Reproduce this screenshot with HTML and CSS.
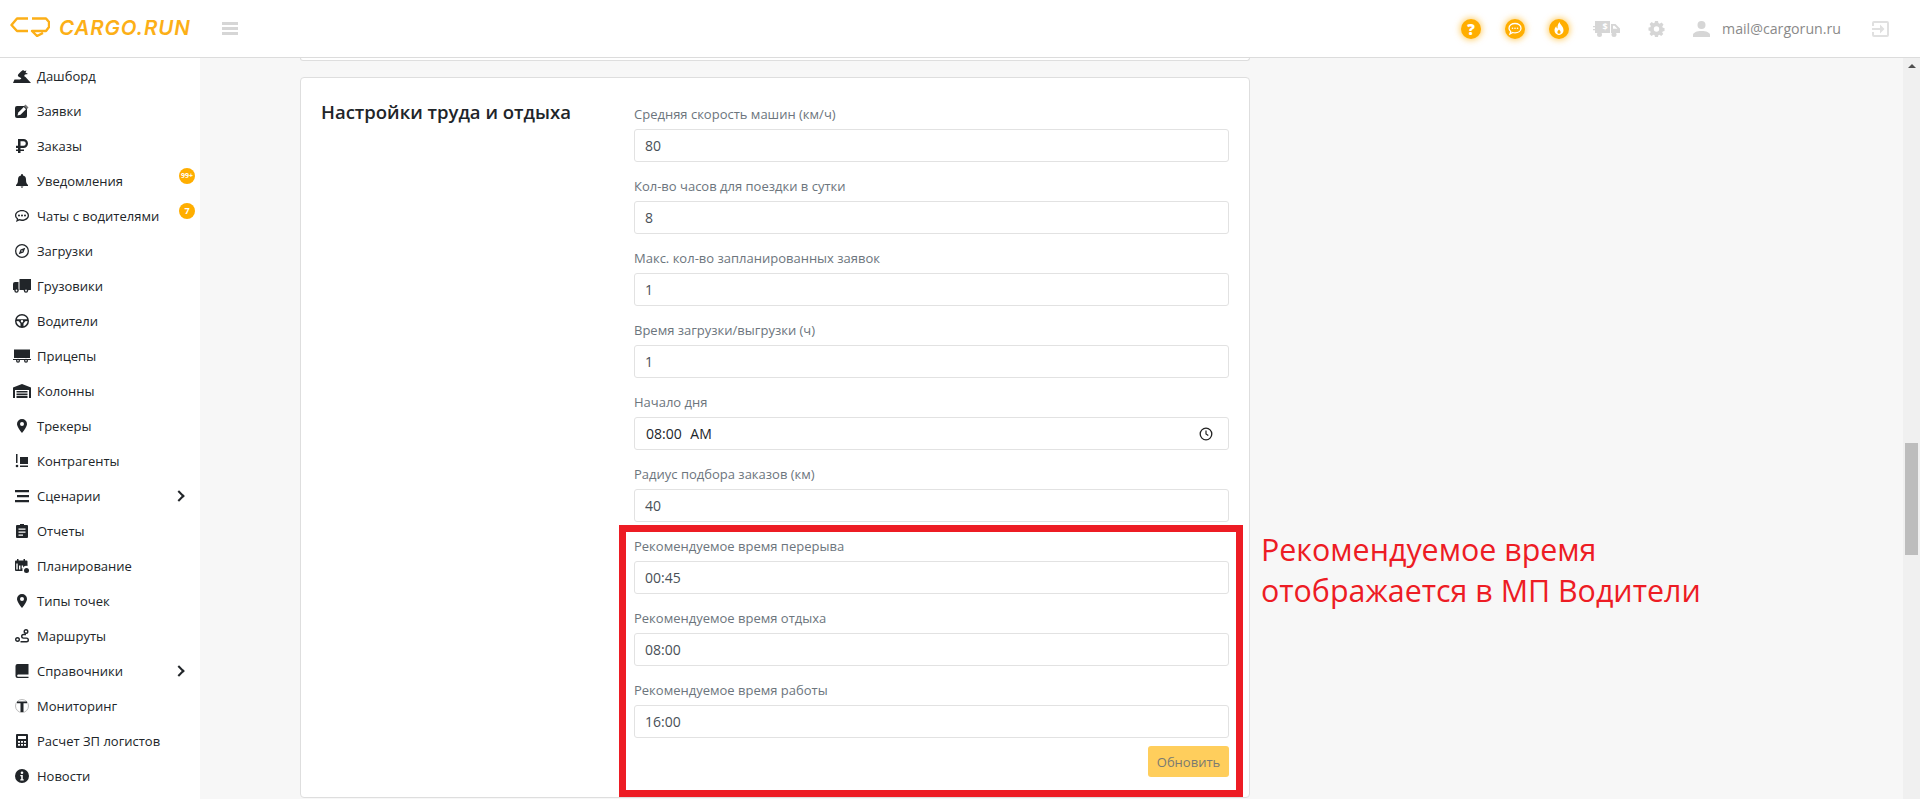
FILE: index.html
```html
<!DOCTYPE html>
<html lang="ru">
<head>
    <meta charset="UTF-8">
    <title>Cargo.Run</title>
    <link rel="stylesheet" href="styles.css">
</head>
<body>
    <svg class="sprite" width="0" height="0" aria-hidden="true">
        <symbol id="i-dash" viewBox="0 0 18 14"><path d="M0 14l1.500-3.500H6c2.500 0 3-1 1-2-2-1-3-2-1-4l2-2L10 1l1.500 1 2-.5-1 2 2.500 1.500-3 .5c-1 1-1 2 .5 2.500L18 14z"/></symbol>
        <symbol id="i-edit" viewBox="0 0 14 14"><rect x="0" y="2" width="12" height="12" rx="2"/><path fill="#fff" d="M2.500 11.500l.8-3L8.800 3l2.200 2.200-5.500 5.500z"/><path fill="#777" d="M10.500 .5L13.500 3.500 12 5 9 2z"/></symbol>
        <symbol id="i-rub" viewBox="0 0 12 14"><path fill-rule="evenodd" d="M2 0h5.500a4.500 4.500 0 0 1 0 9H4.500v1.500H8v1.500H4.500v2H2v-2H0v-1.500h2V9H0V6.800h2zM4.500 2.200v4.600h3a2.300 2.300 0 0 0 0-4.600z"/></symbol>
        <symbol id="i-bell" viewBox="0 0 12 14"><path d="M6 0a1 1 0 0 1 1 1v.6A4 4 0 0 1 10 5.500c0 3 .6 4.200 2 5.500v1H0v-1c1.400-1.300 2-2.500 2-5.500A4 4 0 0 1 5 1.600V1a1 1 0 0 1 1-1zM4.500 12.600h3L6 14z"/></symbol>
        <symbol id="i-chat" viewBox="0 0 14 14"><path fill-rule="evenodd" d="M7 1c3.900 0 7 2.400 7 5.500S10.900 12 7 12c-1 0-1.900-.1-2.700-.4L1 13l.9-2.900C.7 9.200 0 7.900 0 6.500 0 3.400 3.100 1 7 1zm0 1.300c-3.200 0-5.700 1.900-5.700 4.200 0 1.200.7 2.200 1.900 3l-.4 1.100 1.400-.6c.8.300 1.800.5 2.800.5 3.200 0 5.700-1.900 5.700-4s-2.500-4.200-5.700-4.200zM4 5.600a1 1 0 1 1 0 2 1 1 0 0 1 0-2zm3 0a1 1 0 1 1 0 2 1 1 0 0 1 0-2zm3 0a1 1 0 1 1 0 2 1 1 0 0 1 0-2z"/></symbol>
        <symbol id="i-compass" viewBox="0 0 14 14"><path fill-rule="evenodd" d="M7 0a7 7 0 1 1 0 14A7 7 0 0 1 7 0zm0 1.300a5.700 5.700 0 1 0 0 11.400A5.700 5.700 0 0 0 7 1.300zM10.300 3.700L8.500 8.500 3.700 10.300 5.500 5.500zM7 6.200a.8.8 0 1 0 0 1.600.8.8 0 0 0 0-1.600z"/></symbol>
        <symbol id="i-truck" viewBox="0 0 18 14"><path d="M6.500 0H18v11H6.500z"/><path d="M0 5a2 2 0 0 1 2-2h3.500v8H0z"/><circle cx="3.500" cy="11.500" r="2.200"/><circle cx="13" cy="11.500" r="2.200"/><circle cx="3.500" cy="11.500" r=".9" fill="#fff"/><circle cx="13" cy="11.500" r=".9" fill="#fff"/></symbol>
        <symbol id="i-wheel" viewBox="0 0 14 14"><path fill-rule="evenodd" d="M7 0a7 7 0 1 1 0 14A7 7 0 0 1 7 0zm0 1.500A5.500 5.500 0 0 0 1.800 5.200h10.400A5.500 5.500 0 0 0 7 1.500zM1.500 7c0 2.500 1.700 4.700 4 5.300V9.500L3.800 7.200zm11 0l-2.300.2-1.700 2.300v2.800c2.300-.6 4-2.800 4-5.300zM7 6a1.200 1.200 0 1 0 0 2.400A1.200 1.200 0 0 0 7 6z"/></symbol>
        <symbol id="i-trailer" viewBox="0 0 18 14"><path d="M1 .5h16V9H1z"/><path d="M0 10h18v1H0z"/><circle cx="5" cy="11.800" r="2"/><circle cx="13" cy="11.800" r="2"/><circle cx="5" cy="11.800" r=".8" fill="#fff"/><circle cx="13" cy="11.800" r=".8" fill="#fff"/></symbol>
        <symbol id="i-garage" viewBox="0 0 18 14"><path fill-rule="evenodd" d="M9 0l9 3.500V14h-2V6H2v8H0V3.500zM3.500 7h11v1.500h-11zm0 2.400h11v1.500h-11zm0 2.400h11V14h-11z"/></symbol>
        <symbol id="i-pin" viewBox="0 0 10 14"><path fill-rule="evenodd" d="M5 0a5 5 0 0 1 5 5c0 2.500-3 6.500-5 9-2-2.500-5-6.500-5-9a5 5 0 0 1 5-5zm0 3a2 2 0 1 0 0 4 2 2 0 0 0 0-4z"/></symbol>
        <symbol id="i-partner" viewBox="0 0 12 14"><path d="M0 0h1.500v9H0z"/><circle cx="1" cy="12" r="1.300"/><path d="M4 3h8v7H4z"/><path d="M4 11.500h8V13H4z"/></symbol>
        <symbol id="i-lines" viewBox="0 0 14 14"><path d="M0 1h14v2.200H0zM2 6h12v2.200H2zM0 11h14v2.200H0z"/></symbol>
        <symbol id="i-report" viewBox="0 0 12 14"><path fill-rule="evenodd" d="M1 1h3V0h4v1h3a1 1 0 0 1 1 1v11a1 1 0 0 1-1 1H1a1 1 0 0 1-1-1V2a1 1 0 0 1 1-1zm1.500 3.500v1.200h7V4.500zm0 3v1.200h7V7.500zm0 3v1.200h4.500v-1.200z"/></symbol>
        <symbol id="i-plan" viewBox="0 0 14 14"><path fill-rule="evenodd" d="M2 0h1.500v1.500h5V0H10v1.500h1.500a1 1 0 0 1 1 1V7a4 4 0 0 0-5 5H1a1 1 0 0 1-1-1V2.500a1 1 0 0 1 1-1h1zM1.300 4.500v6h1.400v-6zm2.700 2v4h1.400v-4zm2.700 0v3h1.400v-3z"/><circle cx="11.500" cy="11.500" r="2.500"/></symbol>
        <symbol id="i-route" viewBox="0 0 14 14"><circle cx="2.500" cy="10.500" r="1.800" fill="none" stroke="#212529" stroke-width="1.400"/><circle cx="11" cy="2.500" r="1.800" fill="none" stroke="#212529" stroke-width="1.400"/><path fill="none" stroke="#212529" stroke-width="1.400" d="M11 5.500H8.500a1.800 1.800 0 0 0 0 3.600h3a1.800 1.800 0 0 1 0 3.600H5.500"/></symbol>
        <symbol id="i-book" viewBox="0 0 13 14"><path d="M2 0h11v10.500H2.500a1.200 1.200 0 0 0 0 2.300H13V14H2a2 2 0 0 1-2-2V2a2 2 0 0 1 2-2z"/></symbol>
        <symbol id="i-monitor" viewBox="0 0 14 14"><circle cx="7" cy="7" r="6.500" fill="none" stroke="#bbb"/><path d="M2 2.500h10v1.800H8.500V13h-3V4.300H2z"/></symbol>
        <symbol id="i-calc" viewBox="0 0 12 14"><path fill-rule="evenodd" d="M1 0h10a1 1 0 0 1 1 1v12a1 1 0 0 1-1 1H1a1 1 0 0 1-1-1V1a1 1 0 0 1 1-1zm1 2v3h8V2zm0 5v1.800h2V7zm3 0v1.800h2V7zm3 0v1.800h2V7zm-6 3v1.800h2V10zm3 0v1.800h2V10zm3 0v1.800h2V10z"/></symbol>
        <symbol id="i-info" viewBox="0 0 14 14"><path fill-rule="evenodd" d="M7 0a7 7 0 1 1 0 14A7 7 0 0 1 7 0zm0 2.500a1.300 1.300 0 1 0 0 2.600 1.300 1.300 0 0 0 0-2.600zM5.300 6v1.300h.9v3h-.9v1.200h3.400v-1.200h-.9V6z"/></symbol>
    </svg>

    <header class="topbar">
        <div class="brand">
            <svg class="brand-mark" viewBox="0 0 40 20" width="40" height="20">
                <path d="M18 1.500H7L1.500 8 7 14H18M22 1.500H36L39 5V10L36 14H22L27 19 33 16" fill="none" stroke="#fcaf17" stroke-width="2.400" stroke-linejoin="round"/>
            </svg>
            <span class="brand-name">CARGO.RUN</span>
        </div>
        <button class="burger"><span></span><span></span><span></span></button>
        <div class="topbar-right">
            <span class="glow-icon">?</span>
            <span class="glow-icon">
                <svg viewBox="0 0 14 14" width="14" height="14"><path d="M7 1.500c3.300 0 6 2 6 4.700s-2.700 4.600-6 4.600c-.8 0-1.600-.1-2.300-.3L2 12l.7-2.400C1.600 8.700 1 7.500 1 6.200 1 3.500 3.700 1.500 7 1.500z" fill="none" stroke="#fff" stroke-width="1.300"/><circle cx="4.500" cy="6.200" r=".8" fill="#fff"/><circle cx="7" cy="6.200" r=".8" fill="#fff"/><circle cx="9.500" cy="6.200" r=".8" fill="#fff"/></svg>
            </span>
            <span class="glow-icon">
                <svg viewBox="0 0 14 14" width="14" height="14"><path fill-rule="evenodd" d="M7.500 0c.3 2.200 4 4.200 4 8.200A4.600 4.600 0 0 1 7 13a4.600 4.600 0 0 1-4.500-4.800c0-1.800.9-3.200 1.800-4 .1 1.200.6 1.900 1.300 2.200C5.300 4 6 1.800 7.500 0zM7 7.500c-.9 1-1.600 1.700-1.600 2.700a1.600 1.600 0 0 0 3.200 0c0-1-.7-1.700-1.600-2.700z" fill="#fff"/></svg>
            </span>
            <svg class="tool-truck" viewBox="0 0 27 16" width="27" height="16">
                <path d="M2 0h15v12H2z"/>
                <path fill-rule="evenodd" d="M18 3h4.500l4.500 4.500V12h-9zM20 4.800v3h4.500l-3-3z"/>
                <path d="M0 5h6v1.200H0zM0 8h6v1.200H0z"/>
                <circle cx="6.500" cy="13.500" r="2.500"/><circle cx="21" cy="13.500" r="2.500"/>
                <text x="9.500" y="9" class="truck-sign">$</text>
            </svg>
            <svg class="tool-gear" viewBox="0 0 16 16" width="17" height="16"><path fill-rule="evenodd" d="M6.500 0h3l.4 2.100 1.300.6L13 1.500 15 3.600l-1.200 1.800.5 1.300 1.700.3v3l-1.800.4-.5 1.200L14.800 13l-2.100 2-1.700-1.200-1.200.5-.3 1.700h-3l-.4-1.800-1.200-.5L3 15 1 12.900l1.200-1.700-.5-1.200L0 9.500v-3l1.800-.3.500-1.300L1.100 3l2.100-2 1.700 1.200 1.200-.5zM8 5.300a2.700 2.700 0 1 0 0 5.400 2.700 2.700 0 0 0 0-5.400z"/></svg>
            <svg class="tool-user" viewBox="0 0 17 16" width="17" height="16"><circle cx="8.500" cy="4" r="4"/><path d="M0 16v-2c0-2.500 4-4 8.500-4s8.500 1.500 8.500 4v2z"/></svg>
            <span class="user-mail">mail@cargorun.ru</span>
            <svg class="tool-exit" viewBox="0 0 17 16" width="17" height="16"><path d="M2 0h13a2 2 0 0 1 2 2v12a2 2 0 0 1-2 2H2a2 2 0 0 1-2-2v-3h2v3h13V2H2v3H0V2a2 2 0 0 1 2-2z"/><path d="M8 3.500L12.500 8 8 12.500V9H0V7h8z"/></svg>
        </div>
    </header>

    <div class="layout">
        <nav class="sidebar">
            <a class="nav-item"><svg class="nav-icon"><use href="#i-dash"/></svg>Дашборд</a>
            <a class="nav-item"><svg class="nav-icon"><use href="#i-edit"/></svg>Заявки</a>
            <a class="nav-item"><svg class="nav-icon"><use href="#i-rub"/></svg>Заказы</a>
            <a class="nav-item"><svg class="nav-icon"><use href="#i-bell"/></svg>Уведомления<span class="nav-badge badge-small">99+</span></a>
            <a class="nav-item"><svg class="nav-icon"><use href="#i-chat"/></svg>Чаты с водителями<span class="nav-badge">7</span></a>
            <a class="nav-item"><svg class="nav-icon"><use href="#i-compass"/></svg>Загрузки</a>
            <a class="nav-item"><svg class="nav-icon"><use href="#i-truck"/></svg>Грузовики</a>
            <a class="nav-item"><svg class="nav-icon"><use href="#i-wheel"/></svg>Водители</a>
            <a class="nav-item"><svg class="nav-icon"><use href="#i-trailer"/></svg>Прицепы</a>
            <a class="nav-item"><svg class="nav-icon"><use href="#i-garage"/></svg>Колонны</a>
            <a class="nav-item"><svg class="nav-icon"><use href="#i-pin"/></svg>Трекеры</a>
            <a class="nav-item"><svg class="nav-icon"><use href="#i-partner"/></svg>Контрагенты</a>
            <a class="nav-item"><svg class="nav-icon"><use href="#i-lines"/></svg>Сценарии<span class="nav-arrow"></span></a>
            <a class="nav-item"><svg class="nav-icon"><use href="#i-report"/></svg>Отчеты</a>
            <a class="nav-item"><svg class="nav-icon"><use href="#i-plan"/></svg>Планирование</a>
            <a class="nav-item"><svg class="nav-icon"><use href="#i-pin"/></svg>Типы точек</a>
            <a class="nav-item"><svg class="nav-icon"><use href="#i-route"/></svg>Маршруты</a>
            <a class="nav-item"><svg class="nav-icon"><use href="#i-book"/></svg>Справочники<span class="nav-arrow"></span></a>
            <a class="nav-item"><svg class="nav-icon"><use href="#i-monitor"/></svg>Мониторинг</a>
            <a class="nav-item"><svg class="nav-icon"><use href="#i-calc"/></svg>Расчет ЗП логистов</a>
            <a class="nav-item"><svg class="nav-icon"><use href="#i-info"/></svg>Новости</a>
        </nav>

        <main class="content">
            <div class="card card-prev"></div>
            <section class="card card-settings">
                <h3 class="card-title">Настройки труда и отдыха</h3>
                <form class="settings-form">
                    <div class="field"><label>Средняя скорость машин (км/ч)</label><div class="input">80</div></div>
                    <div class="field"><label>Кол-во часов для поездки в сутки</label><div class="input">8</div></div>
                    <div class="field"><label>Макс. кол-во запланированных заявок</label><div class="input">1</div></div>
                    <div class="field"><label>Время загрузки/выгрузки (ч)</label><div class="input">1</div></div>
                    <div class="field"><label>Начало дня</label>
                        <div class="input input-time">08:00 AM
                            <svg viewBox="0 0 14 14" width="14" height="14"><circle cx="7" cy="7" r="5.800" fill="none" stroke="#222" stroke-width="1.300"/><path d="M7 3.500V7l2.300 1.500" fill="none" stroke="#222" stroke-width="1.200"/></svg>
                        </div>
                    </div>
                    <div class="field"><label>Радиус подбора заказов (км)</label><div class="input">40</div></div>
                    <div class="field"><label>Рекомендуемое время перерыва</label><div class="input">00:45</div></div>
                    <div class="field"><label>Рекомендуемое время отдыха</label><div class="input">08:00</div></div>
                    <div class="field"><label>Рекомендуемое время работы</label><div class="input">16:00</div></div>
                    <div class="form-actions"><button type="button" class="btn-update">Обновить</button></div>
                </form>
                <div class="red-frame"></div>
            </section>
            <p class="note">Рекомендуемое время<br>отображается в МП Водители</p>
        </main>
        <div class="scrollbar"><span class="scroll-up"></span><span class="scroll-thumb"></span></div>
    </div>
</body>
</html>
```

FILE: styles.css
```css
* { box-sizing: border-box; margin: 0; padding: 0; }
html, body { height: 100%; overflow: hidden; }
body { background-color: #f7f7f7; font-family: "Open Sans", "Noto Sans", sans-serif; color: #212529; }
.sprite { position: absolute; }

/* Top bar */
.topbar { display: flex; align-items: center; height: 58px; padding: 0 31px 0 10px; background-color: #fff; border-bottom: 1px solid #dcdcdc; }
.brand { display: flex; align-items: center; gap: 9px; width: 212px; padding-bottom: 3px; }
.brand-mark { flex: none; }
.brand-name { font-family: "Inter", sans-serif; font-size: 20.5px; font-weight: 600; font-style: italic; letter-spacing: 0.9px; color: #fcaf17; }
.burger { display: flex; flex-direction: column; gap: 2px; width: 16px; border: none; background: none; }
.burger span { height: 3px; background-color: #d6d6d6; }
.topbar-right { display: flex; align-items: center; margin-left: auto; }
.glow-icon { display: flex; justify-content: center; align-items: center; width: 20px; height: 20px; margin-right: 24px; border-radius: 50%; background-color: #ffae00; box-shadow: 0 0 6px 1px rgba(255, 174, 0, 0.6); color: #fff; font-size: 15px; font-weight: 800; }
.tool-truck, .tool-gear, .tool-user, .tool-exit { fill: #d6d6d6; flex: none; }
.tool-exit { fill: #e0e0e0; }
.truck-sign { font-size: 9px; font-weight: 700; fill: #fff; }
.tool-truck { margin-right: 28px; }
.tool-gear { margin-right: 28px; }
.tool-user { margin-right: 12px; }
.user-mail { width: 118px; margin-right: 32px; font-size: 14.2px; white-space: nowrap; color: #8a8a8a; }

/* Sidebar */
.layout { display: flex; height: 741px; }
.sidebar { flex: none; width: 200px; background-color: #fff; }
.nav-item { position: relative; display: flex; align-items: center; height: 35px; padding-left: 13px; font-size: 13px; color: #212529; }
.nav-icon { flex: none; width: 18px; height: 14px; margin-right: 6px; fill: #212529; }
.nav-badge { position: absolute; top: 5px; left: 179px; width: 16px; height: 16px; border-radius: 50%; background-color: #ffae00; color: #fff; font-size: 9px; font-weight: 700; line-height: 16px; text-align: center; }
.badge-small { font-size: 7px; }
.nav-arrow { position: absolute; left: 175px; top: 14px; width: 8px; height: 8px; border-top: 2px solid #212529; border-right: 2px solid #212529; transform: rotate(45deg); }

/* Content */
.content { flex: 1; display: flex; flex-direction: column; position: relative; padding-left: 100px; }
.card { width: 950px; background-color: #fff; border: 1px solid #dedede; border-radius: 4px; }
.card-prev { height: 3px; border-top: none; border-radius: 0 0 4px 4px; }
.card-settings { position: relative; display: flex; height: 721px; margin-top: 16px; padding: 18px 20px; }
.card-title { width: 313px; flex: none; padding-top: 4px; font-size: 18.5px; font-weight: 600; line-height: 24px; color: #212529; }
.settings-form { flex: 1; display: flex; flex-direction: column; }
.field { display: flex; flex-direction: column; margin-bottom: 6px; }
.field label { height: 33px; padding-top: 9px; font-size: 13px; line-height: 18px; color: #6c757d; }
.input { display: flex; align-items: center; height: 33px; padding: 0 10px; border: 1px solid #e2e2e2; border-radius: 3px; background-color: #fff; font-size: 14px; color: #495057; }
.input-time { justify-content: space-between; padding: 0 15px 0 11px; word-spacing: 5px; color: #212529; }
.form-actions { display: flex; justify-content: flex-end; margin-top: 2px; }
.btn-update { width: 81px; height: 31px; border: none; border-radius: 3px; background-color: #ffce5c; color: #7a7a72; font-family: inherit; font-size: 13px; }
.red-frame { position: absolute; left: 318px; top: 447px; width: 624px; height: 272px; border: 7px solid #ed1c24; pointer-events: none; }
.note { position: absolute; left: 1061px; top: 471px; font-size: 30.4px; line-height: 41px; color: #ed1c24; }

/* Scrollbar */
.scrollbar { position: relative; flex: none; width: 17px; background-color: #f0f0f0; }
.scroll-up { position: absolute; left: 5px; top: 6px; border-left: 4px solid transparent; border-right: 4px solid transparent; border-bottom: 4px solid #505050; }
.scroll-thumb { position: absolute; left: 2px; top: 385px; width: 13px; height: 112px; background-color: #bdbdbd; }
```
